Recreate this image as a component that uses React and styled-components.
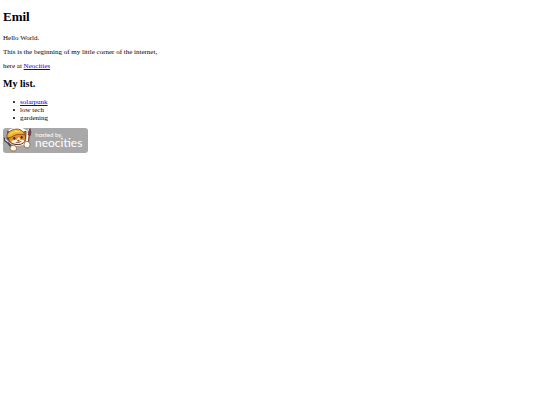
import React from "react";
import styled, { createGlobalStyle } from "styled-components";

const GlobalStyle = createGlobalStyle`
  body {
    margin: 0;
    background: #fff;
    color: #000;
    font-family: "Liberation Serif", "Times New Roman", serif;
    font-size: 7px;
    line-height: 8px;
  }
`;

const Page = styled.main`
  padding: 9px 3px;
`;

const Title = styled.h1`
  margin: 0 0 10px;
  font-size: 13px;
  line-height: 15px;
`;

const Paragraph = styled.p`
  margin: 0 0 6px;
`;

const Subtitle = styled.h2`
  margin: 8px 0;
  font-size: 10px;
  line-height: 12px;
`;

const Link = styled.a`
  color: #0000ee;
  text-decoration: underline;
`;

const List = styled.ul`
  margin: 0 0 6px;
  padding: 0 0 0 10px;
  list-style: none;
`;

const ListItem = styled.li`
  display: flex;
  align-items: center;
  gap: 5px;

  &::before {
    content: "";
    width: 2px;
    height: 2px;
    border-radius: 1px;
    background: #000;
  }
`;

const BadgeLink = styled.a`
  display: block;
  width: fit-content;
`;

const Badge = styled.svg`
  display: block;
  width: 85px;
  height: 25px;
`;

const BadgeText = styled.text`
  fill: #fff;
  font-family: Lato, "Open Sans", sans-serif;
  font-size: ${({ $size }) => $size}px;
`;

function HostedBadge() {
  return (
    <Badge viewBox="0 0 255 75" role="img" aria-label="Hosted by Neocities">
      <rect width="255" height="75" rx="9" fill="#a8a8a8" />
      <g stroke="#fff" strokeWidth="6" strokeLinejoin="round" strokeLinecap="round" fill="#fff">
        <path d="M17 15 Q20 2 40 3 L57 3 L70 10 L72 36 L61 48 L42 51 L22 44Z" />
        <path d="M5 34 L27 59 M77 7 L73 54" />
      </g>
      <path d="M4 29 L5 38 L12 43 L30 65 M12 27 L14 35 M16 43 L29 59" fill="none" stroke="#48494c" strokeWidth="4" />
      <path d="M16 28 L14 10 L26 17 Q40 8 55 15 L69 10 L68 34 Q65 48 46 50 Q25 50 18 38Z" fill="#e88a32" stroke="#593118" strokeWidth="3" />
      <path d="M24 41 Q32 34 40 36 L48 27 L52 36 Q61 33 64 39 Q60 47 45 48 Q30 47 24 41Z" fill="#fff5df" />
      <path d="M11 25 Q14 9 31 5 Q48 -1 61 12 L66 21 Q43 14 24 28 Q14 32 11 25Z" fill="#edb535" stroke="#8c591d" strokeWidth="3" />
      <path d="M20 19 Q35 7 52 10 M35 6 L48 13" fill="none" stroke="#ffdc62" strokeWidth="3" />
      <ellipse cx="34" cy="31" rx="3" ry="4" fill="#39251e" />
      <ellipse cx="56" cy="28" rx="3" ry="4" fill="#39251e" />
      <path d="M43 37 L49 36 L46 40Z M38 43 Q47 46 55 40" fill="#9e4932" stroke="#81452d" strokeWidth="2" />
      <path d="M79 20 L75 52" stroke="#78422b" strokeWidth="4" />
      <path d="M76 21 Q74 11 81 2 Q86 12 82 22Z" fill="#a92d32" stroke="#50282a" strokeWidth="2" />
      <ellipse cx="31" cy="61" rx="10" ry="9" fill="#fff8e8" stroke="#665044" strokeWidth="2" />
      <ellipse cx="72" cy="50" rx="9" ry="10" fill="#fff8e8" stroke="#665044" strokeWidth="2" />
      <path d="M22 63 Q26 72 36 69 M68 59 Q76 64 81 54" fill="none" stroke="#d78335" strokeWidth="3" />
      <BadgeText x="97" y="28" $size={18}>hosted by,</BadgeText>
      <BadgeText x="96" y="58" $size={36}>neocities</BadgeText>
    </Badge>
  );
}

export default function App() {
  return (
    <>
      <GlobalStyle />
      <Page>
        <Title>Emil</Title>
        <Paragraph>Hello World.</Paragraph>
        <Paragraph>This is the beginning of my little corner of the internet,</Paragraph>
        <Paragraph>
          here at <Link href="https://neocities.org">Neocities</Link>
        </Paragraph>
        <Subtitle>My list.</Subtitle>
        <List>
          <ListItem><Link href="#solarpunk">solarpunk</Link></ListItem>
          <ListItem>low tech</ListItem>
          <ListItem>gardening</ListItem>
        </List>
        <BadgeLink href="https://neocities.org">
          <HostedBadge />
        </BadgeLink>
      </Page>
    </>
  );
}
